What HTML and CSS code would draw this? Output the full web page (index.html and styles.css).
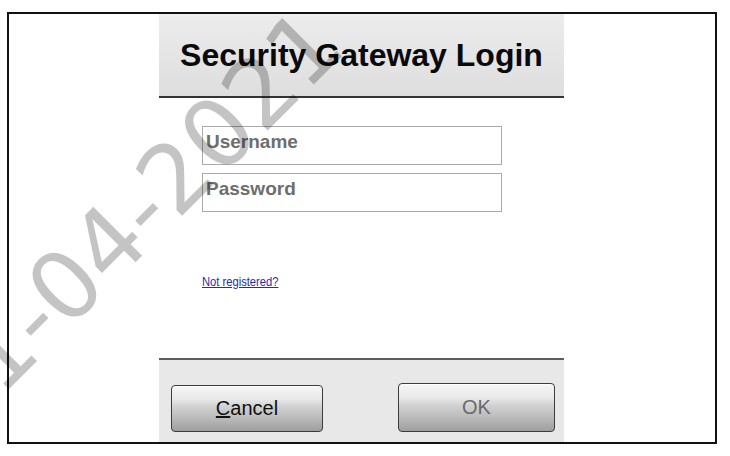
FILE: index.html
```html
<!DOCTYPE html>
<html lang="en">
<head>
  <meta charset="UTF-8" />
  <title>Security Gateway Login</title>
  <link rel="stylesheet" href="styles.css">
</head>
<body>

  <div class="frame">
    <div class="dialog">
      <div class="dlg-head">
        <h1>Security Gateway Login</h1>
      </div>

      <div class="dlg-body">
        <input type="text" class="field" placeholder="Username" />
        <input type="password" class="field" placeholder="Password" />
        <a href="#" class="register">Not registered?</a>
      </div>

      <div class="dlg-foot">
        <button class="btn btn-cancel"><u>C</u>ancel</button>
        <button class="btn btn-ok">OK</button>
      </div>
    </div>
  </div>

  <!-- watermark stamp over the whole capture -->
  <div class="watermark">1-04-2021</div>

</body>
</html>
```

FILE: styles.css
```css
body {
  margin: 0;
  width: 730px;
  height: 456px;
  overflow: hidden;
  position: relative;
  background: #fff;
  font-family: "Liberation Sans", Arial, sans-serif;
  color: #000;
}

.frame {
  box-sizing: border-box;
  width: 710px;
  height: 432px;
  margin: 12px 0 0 7px;
  border: 2px solid #111;
  display: flex;
  padding-left: 150px;
}

.dialog {
  width: 405px;
  display: flex;
  flex-direction: column;
}

.dlg-head {
  box-sizing: border-box;
  height: 84px;
  background: linear-gradient(#ececec, #dedede);
  border-bottom: 2px solid #333;
  display: flex;
  align-items: center;
  justify-content: center;
}

.dlg-head h1 {
  margin: 0;
  font-size: 32px;
  font-weight: bold;
  color: #0a0a0a;
}

.dlg-body {
  flex: 1;
  background: #fff;
  padding: 28px 0 0 43px;
  display: flex;
  flex-direction: column;
  align-items: flex-start;
}

.field {
  box-sizing: border-box;
  width: 300px;
  height: 39px;
  margin: 0 0 8px 0;
  padding: 0 3px 7px 3px;
  border: 1px solid #a9a9a9;
  background: #fff;
  font-family: "Liberation Sans", Arial, sans-serif;
  font-size: 19px;
  font-weight: bold;
  outline: none;
}

.field::placeholder {
  color: #6e6e6e;
  opacity: 1;
}

.register {
  display: inline-block;
  margin-top: 54px;
  font-family: "Liberation Sans", Arial, sans-serif;
  font-size: 13px;
  line-height: 15px;
  color: #2a2ab0;
  text-decoration: underline;
  transform: scaleX(0.86);
  transform-origin: 0 50%;
}

.dlg-foot {
  box-sizing: border-box;
  height: 84px;
  background: #e8e8e8;
  border-top: 2px solid #5c5c5c;
  display: flex;
  justify-content: space-between;
  align-items: flex-end;
  padding: 0 9px 10px 12px;
}

.btn {
  box-sizing: border-box;
  border: 1px solid #3c3c3c;
  border-radius: 4px;
  background: linear-gradient(#f6f6f6 0%, #e8e8e8 30%, #d2d2d2 45%, #bcbcbc 70%, #9e9e9e 100%);
  box-shadow: inset 0 1px 0 #fff;
  font-family: "Liberation Sans", Arial, sans-serif;
  font-size: 20px;
  cursor: pointer;
}

.btn-cancel {
  width: 152px;
  height: 47px;
  color: #111;
}

.btn-ok {
  width: 157px;
  height: 49px;
  color: #6a6a6a;
}

.watermark {
  position: absolute;
  left: -56px;
  top: 341px;
  transform-origin: 0 0;
  transform: rotate(-45deg);
  font-family: "DejaVu Sans", sans-serif;
  font-size: 95px;
  line-height: 95px;
  color: rgba(0, 0, 0, 0.23);
  white-space: nowrap;
  pointer-events: none;
}
```
